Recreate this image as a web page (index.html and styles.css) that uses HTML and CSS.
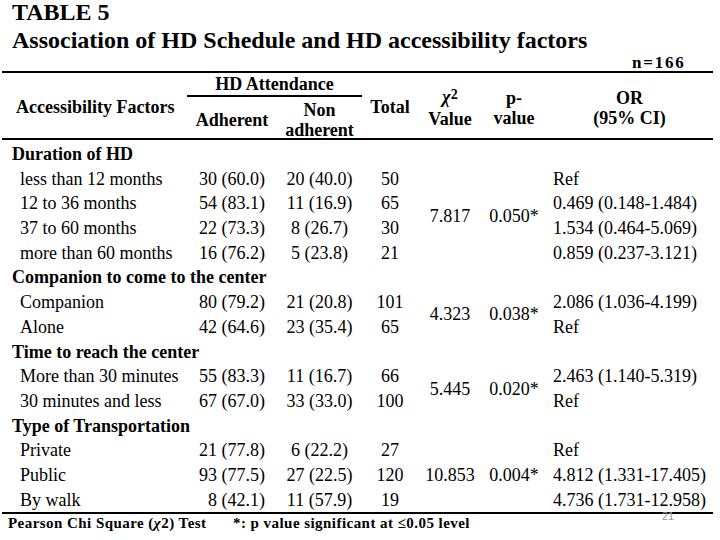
FILE: index.html
```html
<!DOCTYPE html>
<html>
<head>
<meta charset="utf-8">
<link rel="stylesheet" href="styles.css">
</head>
<body>
<div class="page">
  <div class="title">
    <div>TABLE 5</div>
    <div>Association of HD Schedule and HD accessibility factors</div>
  </div>
  <div class="n">n=166</div>
  <div class="table">
    <div class="thead">
      <div class="h-factor">Accessibility Factors</div>
      <div class="h-att">HD Attendance</div>
      <div class="h-adh">Adherent</div>
      <div class="h-non"><div>Non<br>adherent</div></div>
      <div class="h-tot">Total</div>
      <div class="h-chi"><div><span class="chi">χ</span><span class="sup">2</span><br>Value</div></div>
      <div class="h-p"><div>p-<br>value</div></div>
      <div class="h-or"><div>OR<br>(95% CI)</div></div>
    </div>
    <div class="tbody">
      <div class="group g5">
        <div class="head">Duration of HD</div>
        <div class="lab">less than 12 months</div><div class="adh">30 (60.0)</div><div class="non">20 (40.0)</div><div class="tot">50</div>
        <div class="chival">7.817</div><div class="pval">0.050*</div>
        <div class="or">Ref</div>
        <div class="lab">12 to 36 months</div><div class="adh">54 (83.1)</div><div class="non">11 (16.9)</div><div class="tot">65</div><div class="or">0.469 (0.148-1.484)</div>
        <div class="lab">37 to 60 months</div><div class="adh">22 (73.3)</div><div class="non">8 (26.7)</div><div class="tot">30</div><div class="or">1.534 (0.464-5.069)</div>
        <div class="lab">more than 60 months</div><div class="adh">16 (76.2)</div><div class="non">5 (23.8)</div><div class="tot">21</div><div class="or">0.859 (0.237-3.121)</div>
      </div>
      <div class="group g3">
        <div class="head">Companion to come to the center</div>
        <div class="lab">Companion</div><div class="adh">80 (79.2)</div><div class="non">21 (20.8)</div><div class="tot">101</div>
        <div class="chival">4.323</div><div class="pval">0.038*</div>
        <div class="or">2.086 (1.036-4.199)</div>
        <div class="lab">Alone</div><div class="adh">42 (64.6)</div><div class="non">23 (35.4)</div><div class="tot">65</div><div class="or">Ref</div>
      </div>
      <div class="group g3">
        <div class="head">Time to reach the center</div>
        <div class="lab">More than 30 minutes</div><div class="adh">55 (83.3)</div><div class="non">11 (16.7)</div><div class="tot">66</div>
        <div class="chival">5.445</div><div class="pval">0.020*</div>
        <div class="or">2.463 (1.140-5.319)</div>
        <div class="lab">30 minutes and less</div><div class="adh">67 (67.0)</div><div class="non">33 (33.0)</div><div class="tot">100</div><div class="or">Ref</div>
      </div>
      <div class="group g4">
        <div class="head">Type of Transportation</div>
        <div class="lab">Private</div><div class="adh">21 (77.8)</div><div class="non">6 (22.2)</div><div class="tot">27</div>
        <div class="chival">10.853</div><div class="pval">0.004*</div>
        <div class="or">Ref</div>
        <div class="lab">Public</div><div class="adh">93 (77.5)</div><div class="non">27 (22.5)</div><div class="tot">120</div><div class="or">4.812 (1.331-17.405)</div>
        <div class="lab">By walk</div><div class="adh">8 (42.1)</div><div class="non">11 (57.9)</div><div class="tot">19</div><div class="or">4.736 (1.731-12.958)</div>
      </div>
    </div>
    <div class="tfoot">
      <div>Pearson Chi Square (<span class="chi">χ</span>2) Test</div>
      <div>*: p value significant at ≤0.05 level</div>
    </div>
    <div class="slide-no">21</div>
  </div>
</div>
</body>
</html>
```
FILE: styles.css
```css
html, body {
  margin: 0;
  padding: 0;
  background: #fff;
}
body {
  width: 720px;
  height: 540px;
  overflow: hidden;
  font-family: "Liberation Serif", "Times New Roman", serif;
  color: #000;
}
.page {
  display: flex;
  flex-direction: column;
}
.title {
  margin-top: -2px;
  padding-left: 12px;
  font-size: 24px;
  font-weight: bold;
  line-height: 28px;
}
.n {
  align-self: flex-start;
  margin-left: 632px;
  font-size: 17px;
  font-weight: bold;
  letter-spacing: 1.8px;
  line-height: 17px;
}
.table {
  position: relative;
  margin-left: 2px;
  width: 711px;
  border-top: 2px solid #000;
}
.thead, .group {
  display: grid;
  grid-template-columns: 185px 90px 85px 56px 64px 64px 167px;
}
.thead {
  grid-template-rows: 24px 41px;
  border-bottom: 2px solid #000;
  font-size: 18px;
  font-weight: bold;
  line-height: 20px;
  text-align: center;
}
.thead > div {
  display: flex;
  align-items: center;
  justify-content: center;
}
.h-factor {
  grid-column: 1;
  grid-row: 1 / 3;
  padding-top: 2px;
  padding-left: 14px;
  justify-content: flex-start !important;
}
.h-att {
  grid-column: 2 / 4;
  grid-row: 1;
  border-bottom: 2px solid #000;
}
.h-adh {
  grid-column: 2;
  grid-row: 2;
  padding-top: 4px;
}
.h-non {
  grid-column: 3;
  grid-row: 2;
  padding-top: 4px;
}
.h-tot {
  grid-column: 4;
  grid-row: 1 / 3;
  padding-top: 2px;
}
.h-chi {
  grid-column: 5;
  grid-row: 1 / 3;
  padding-top: 4px;
}
.h-p {
  grid-column: 6;
  grid-row: 1 / 3;
  padding-top: 4px;
}
.h-or {
  grid-column: 7;
  grid-row: 1 / 3;
  padding-top: 4px;
}
.chi {
  font-style: italic;
}
.sup {
  font-size: 14px;
  position: relative;
  top: -4px;
}
.tbody {
  padding-top: 2px;
  border-bottom: 2px solid #000;
  font-size: 18px;
  line-height: 24.7px;
}
.g5 { grid-template-rows: repeat(5, 24.7px); }
.g4 { grid-template-rows: repeat(4, 24.7px); }
.g3 { grid-template-rows: repeat(3, 24.7px); }
.head {
  grid-column: 1 / -1;
  padding-left: 10px;
  font-weight: bold;
  white-space: nowrap;
}
.lab {
  grid-column: 1;
  padding-left: 18px;
  white-space: nowrap;
}
.adh {
  grid-column: 2;
  text-align: right;
  padding-right: 12px;
}
.non {
  grid-column: 3;
  text-align: center;
}
.tot {
  grid-column: 4;
  text-align: center;
}
.chival, .pval {
  grid-row: 2 / -1;
  display: flex;
  align-items: center;
  justify-content: center;
}
.chival { grid-column: 5; }
.pval { grid-column: 6; }
.or {
  grid-column: 7;
  padding-left: 7px;
  white-space: nowrap;
}
.tfoot {
  display: grid;
  grid-template-columns: 225px auto;
  padding-left: 6px;
  font-size: 15px;
  font-weight: bold;
  letter-spacing: 0.45px;
  line-height: 18px;
}
.slide-no {
  position: absolute;
  left: 660px;
  top: 437px;
  font-family: "Liberation Sans", Arial, sans-serif;
  font-size: 11px;
  line-height: 12px;
  color: #999;
}
```
